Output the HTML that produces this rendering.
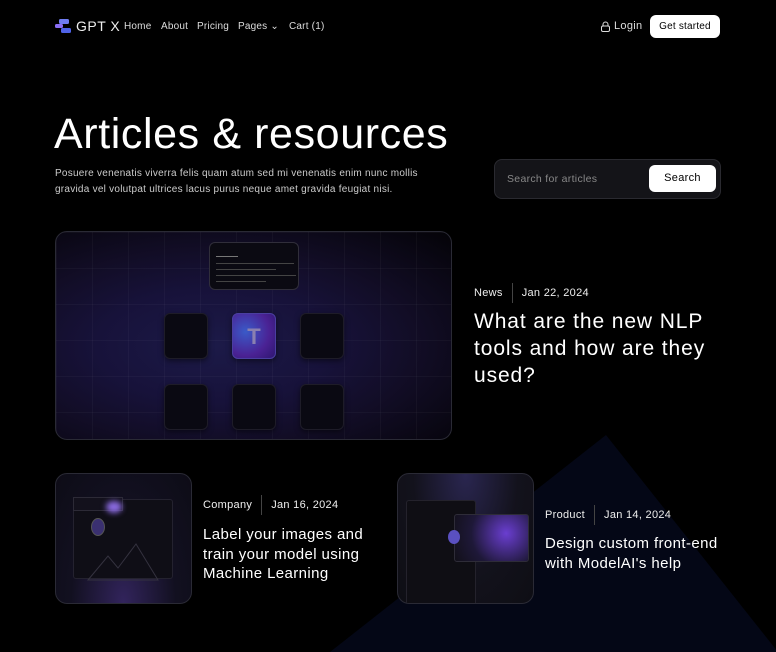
<!DOCTYPE html>
<html><head><meta charset="utf-8"><style>
*{margin:0;padding:0;box-sizing:border-box}
html,body{width:776px;height:652px;overflow:hidden}
body{background:#000;color:#fff;font-family:"Liberation Sans",sans-serif;position:relative}
.abs{position:absolute}
.nav a{position:absolute;top:21px;font-size:10px;color:#ddd;white-space:nowrap;letter-spacing:0.2px}
.card{position:absolute;border:1px solid #2a2a35;border-radius:12px;overflow:hidden}
.tile{position:absolute;width:44px;height:46px;border-radius:6px;background:#0a0912;border:1px solid #1e1c28;box-shadow:0 2px 6px rgba(0,0,0,.5)}
.meta{position:absolute;font-size:11px;color:#eee;white-space:nowrap;letter-spacing:0.3px}
.meta span.sep{display:inline-block;width:1px;height:20px;background:#444;vertical-align:middle;margin:0 9px}
.title{position:absolute;color:#fff;white-space:nowrap}
</style></head><body>
<svg class="abs" style="left:0;top:0" width="776" height="652"><polygon points="606,435 330,652 778,652" fill="#040716"/>
<defs><radialGradient id="orb" cx="50%" cy="60%" r="50%"><stop offset="0" stop-color="#e89cff"/><stop offset=".6" stop-color="#8a4cf0"/><stop offset="1" stop-color="#3a1a80" stop-opacity="0"/></radialGradient></defs>
<ellipse cx="540" cy="672" rx="36" ry="26" fill="url(#orb)"/></svg>

<svg class="abs" style="left:55px;top:18px" width="18" height="16" viewBox="0 0 18 16"><rect x="4" y="1" width="10" height="5" rx="1.5" fill="#6f7cf0"/><rect x="0" y="6" width="8" height="4" rx="1.5" fill="#8a6ef5"/><rect x="6" y="10" width="10" height="5" rx="1.5" fill="#4f63e8"/></svg>
<div class="abs" style="left:76px;top:18px;font-size:14px;color:#eee;letter-spacing:0.5px">GPT X</div>
<div class="nav"><a style="left:124px">Home</a><a style="left:161px">About</a><a style="left:197px">Pricing</a><a style="left:238px">Pages ⌄</a><a style="left:289px">Cart (1)</a></div>
<svg class="abs" style="left:601px;top:21px" width="9" height="11" viewBox="0 0 9 11"><path d="M2 5V3.5a2.5 2.5 0 0 1 5 0V5" stroke="#ddd" fill="none" stroke-width="1"/><rect x=".5" y="5" width="8" height="5.5" rx="1.5" stroke="#ddd" fill="none"/></svg>
<div class="abs" style="left:614px;top:20px;font-size:11px;color:#ddd;letter-spacing:0.3px">Login</div>
<div class="abs" style="left:650px;top:15px;width:70px;height:23px;background:#fff;border-radius:6px;color:#000;font-size:10px;text-align:center;line-height:23px;letter-spacing:0.2px">Get started</div>

<div class="abs" style="left:54px;top:110px;font-size:43px;letter-spacing:0.6px;color:#fff;white-space:nowrap">Articles &amp; resources</div>
<div class="abs" style="left:55px;top:166px;font-size:10px;line-height:16px;color:#ccc;width:395px;letter-spacing:0.25px">Posuere venenatis viverra felis quam atum sed mi venenatis enim nunc mollis gravida vel volutpat ultrices lacus purus neque amet gravida feugiat nisi.</div>
<div class="abs" style="left:494px;top:159px;width:227px;height:40px;background:#141418;border:1px solid #2a2a30;border-radius:8px"></div>
<div class="abs" style="left:507px;top:173px;font-size:10.5px;color:#888;letter-spacing:0.3px">Search for articles</div>
<div class="abs" style="left:649px;top:165px;width:67px;height:27px;background:#fff;border-radius:6px;color:#000;font-size:11px;text-align:center;line-height:27px;letter-spacing:0.3px">Search</div>

<div class="card" style="left:55px;top:231px;width:397px;height:209px;background:radial-gradient(ellipse at 40% 55%,#1c1a48 0%,#17123a 35%,#120d26 60%,#040307 100%)">
<div class="abs" style="inset:0;background-image:linear-gradient(rgba(255,255,255,.03) 1px,transparent 1px),linear-gradient(90deg,rgba(255,255,255,.03) 1px,transparent 1px);background-size:36px 36px"></div>
<div class="abs" style="left:153px;top:10px;width:90px;height:48px;background:#0b0a12;border:1px solid #302e3a;border-radius:6px">
<div class="abs" style="left:6px;top:13px;width:22px;height:1px;background:#777"></div>
<div class="abs" style="left:6px;top:20px;width:78px;height:1px;background:#444"></div>
<div class="abs" style="left:6px;top:26px;width:60px;height:1px;background:#444"></div>
<div class="abs" style="left:6px;top:32px;width:80px;height:1px;background:#444"></div>
<div class="abs" style="left:6px;top:38px;width:50px;height:1px;background:#444"></div></div>
<div class="tile" style="left:108px;top:81px"></div>
<div class="tile" style="left:176px;top:81px;background:radial-gradient(circle at 30% 40%,#3a5ac8,#4a2294 60%,#2e1670);border-color:#4a3ea0"><div style="text-align:center;font-size:22px;color:#8a80b0;line-height:46px;font-weight:bold">T</div></div>
<div class="tile" style="left:244px;top:81px"></div>
<div class="tile" style="left:108px;top:152px"></div>
<div class="tile" style="left:176px;top:152px"></div>
<div class="tile" style="left:244px;top:152px"></div>
</div>
<div class="meta" style="left:474px;top:283px">News<span class="sep"></span>Jan 22, 2024</div>
<div class="title" style="left:474px;top:308px;font-size:21px;line-height:27px;letter-spacing:0.9px">What are the new NLP<br>tools and how are they<br>used?</div>

<div class="card" style="left:55px;top:473px;width:137px;height:131px;background:radial-gradient(ellipse at 50% 100%,#32245c,#121020 55%,#0d0c16)">
<div class="abs" style="left:17px;top:25px;width:100px;height:80px;background:#0f0e16;border:1px solid #24222f;border-radius:3px"></div>
<div class="abs" style="left:17px;top:23px;width:50px;height:14px;background:#13111c;border:1px solid #2c2a36"></div>
<div class="abs" style="left:50px;top:27px;width:16px;height:12px;border-radius:50%;background:#8a6ae0;filter:blur(3px)"></div>
<div class="abs" style="left:35px;top:44px;width:14px;height:18px;border-radius:50%;background:#3a3070;border:1px solid #555"></div>
<svg class="abs" style="left:30px;top:60px" width="80" height="50"><path d="M2 46 L22 22 L32 34 L50 10 L72 46 Z" fill="none" stroke="#34323f"/></svg>
</div>
<div class="meta" style="left:203px;top:495px">Company<span class="sep"></span>Jan 16, 2024</div>
<div class="title" style="left:203px;top:525px;font-size:15px;line-height:19.5px;letter-spacing:0.4px">Label your images and<br>train your model using<br>Machine Learning</div>

<div class="card" style="left:397px;top:473px;width:137px;height:131px;background:radial-gradient(ellipse at 50% 0%,#2a2650,#13121c 55%,#0e0e14)">
<div class="abs" style="left:8px;top:26px;width:70px;height:108px;background:#0f0e14;border:1px solid #24222c;border-radius:3px"></div>
<div class="abs" style="left:56px;top:40px;width:75px;height:48px;background:radial-gradient(circle at 70% 40%,#6a3ed0,#1e1838 60%,#121019);border:1px solid #2e2c38;border-radius:3px"></div>
<div class="abs" style="left:50px;top:56px;width:12px;height:14px;border-radius:50%;background:#5a50c0"></div>
</div>
<div class="meta" style="left:545px;top:505px">Product<span class="sep"></span>Jan 14, 2024</div>
<div class="title" style="left:545px;top:534px;font-size:15px;line-height:19.5px;letter-spacing:0.4px">Design custom front-end<br>with ModelAI's help</div>
</body></html>
